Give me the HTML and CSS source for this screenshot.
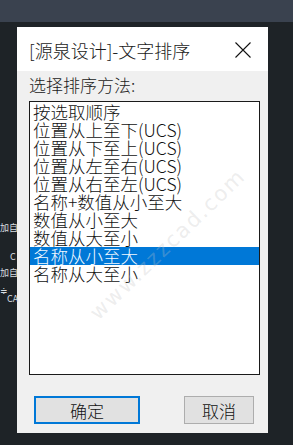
FILE: index.html
```html
<!DOCTYPE html>
<html lang="zh">
<head>
<meta charset="utf-8">
<link rel="stylesheet" href="styles.css">
</head>
<body>
<div class="topbar"></div>
<div class="bg-text t1">加自</div>
<div class="bg-text t2">C</div>
<div class="bg-text t3">加自</div>
<div class="bg-text t4">≑</div>
<div class="bg-text t5">CA</div>
<div class="dialog">
  <div class="titlebar">
    <span class="title">[源泉设计]-文字排序</span>
    <svg class="close" width="16" height="16" viewBox="0 0 16 16"><path d="M0.5 0.5 L15.5 15.5 M15.5 0.5 L0.5 15.5" stroke="#111" stroke-width="1.1" fill="none"/></svg>
  </div>
  <div class="content">
    <div class="label">选择排序方法:</div>
    <div class="list">
      <div class="item">按选取顺序</div>
      <div class="item">位置从上至下(UCS)</div>
      <div class="item">位置从下至上(UCS)</div>
      <div class="item">位置从左至右(UCS)</div>
      <div class="item">位置从右至左(UCS)</div>
      <div class="item">名称+数值从小至大</div>
      <div class="item">数值从小至大</div>
      <div class="item">数值从大至小</div>
      <div class="item selected">名称从小至大</div>
      <div class="item">名称从大至小</div>
    </div>
    <div class="buttons">
      <div class="btn ok">确定</div>
      <div class="btn cancel">取消</div>
    </div>
  </div>
</div>
<div class="watermark">www.zzzcad.com</div>
</body>
</html>
```
FILE: styles.css
```css
html, body {
  margin: 0;
  padding: 0;
}
body {
  width: 293px;
  height: 445px;
  overflow: hidden;
  background: #1e2327;
  position: relative;
  font-family: "Noto Sans CJK SC", sans-serif;
}
.topbar {
  height: 22px;
  background: #3a424f;
}
.bg-text {
  position: absolute;
  color: #d8dde0;
  font-size: 9px;
  line-height: 10px;
}
.t1 { left: 0; top: 223px; }
.t2 { left: 10px; top: 252px; }
.t3 { left: 0; top: 268px; }
.t4 { left: 0; top: 286px; }
.t5 { left: 7px; top: 294px; }
.dialog {
  margin: 5px 0 0 17px;
  width: 251px;
  height: 406px;
  background: #f0f0f0;
  display: flex;
  flex-direction: column;
}
.titlebar {
  height: 44px;
  background: #ffffff;
  display: flex;
  align-items: center;
  justify-content: space-between;
  padding: 0 17px 0 12px;
}
.title {
  font-size: 18px;
  line-height: 22px;
  font-weight: 300;
  color: #1a1a1a;
  padding-top: 1px;
}
.close {
  display: block;
  margin-top: 2px;
}
.content {
  padding: 4px 0 0 12px;
}
.label {
  font-size: 17px;
  line-height: 20px;
  font-weight: 300;
  color: #1a1a1a;
  height: 20px;
}
.list {
  margin-top: 6px;
  width: 229px;
  height: 271px;
  border: 1px solid #1a1a1a;
  background: #ffffff;
  padding-top: 1px;
  box-sizing: content-box;
}
.item {
  height: 18px;
  line-height: 18px;
  font-size: 17.5px;
  font-weight: 300;
  padding-left: 3px;
  color: #111;
  white-space: nowrap;
}
.item.selected {
  background: #0078d7;
  color: #f2f8ff;
}
.buttons {
  margin-top: 21px;
  display: flex;
  padding-left: 5px;
}
.btn {
  height: 28px;
  box-sizing: border-box;
  background: #e1e1e1;
  font-size: 17px;
  font-weight: 300;
  color: #111;
  display: flex;
  align-items: center;
  justify-content: center;
}
.btn.ok {
  width: 106px;
  border: 2px solid #0078d7;
}
.btn.cancel {
  width: 70px;
  margin-left: 44px;
  border: 1px solid #adadad;
}
.watermark {
  position: absolute;
  left: 66px;
  top: 236px;
  width: 196px;
  text-align: center;
  font-family: "DejaVu Sans", sans-serif;
  font-size: 21px;
  line-height: 24px;
  color: rgba(195, 195, 195, 0.3);
  transform: rotate(-44deg);
  letter-spacing: 2px;
}
```
